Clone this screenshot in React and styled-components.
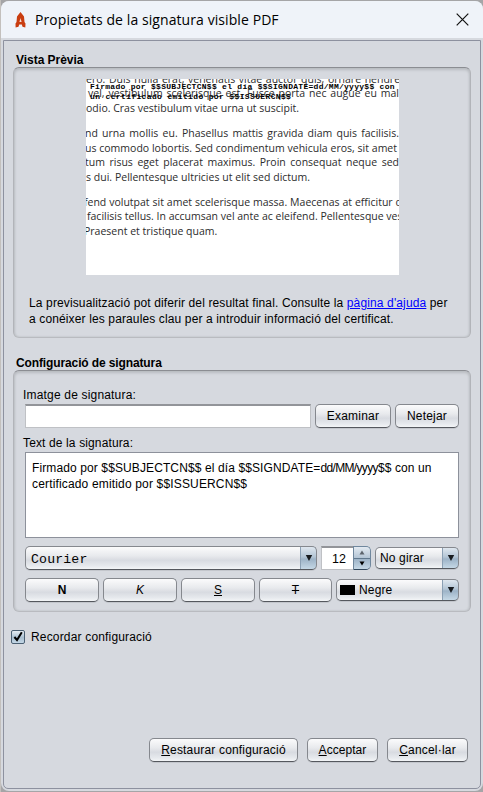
import React from "react";
import styled, { createGlobalStyle, css } from "styled-components";

const GlobalStyle = createGlobalStyle`
  * { box-sizing: border-box; }
  body { margin: 0; background: #b4b2b0; overflow: hidden; }
  button { font: inherit; color: inherit; margin: 0; }
`;

const Desktop = styled.div`
  width: 483px;
  height: 792px;
  padding: 1px 0 1px 1px;
  background: linear-gradient(90deg, #c3c0bd 0 1px, #a5a5a7 1px);
  font: 12px/16px "Liberation Sans", Arial, sans-serif;
  color: #000;
`;

const Window = styled.div`
  display: flex;
  flex-direction: column;
  height: 790px;
  border-radius: 8px;
  background: #d6d9df;
  overflow: hidden;
`;

const TitleBar = styled.header`
  display: flex;
  align-items: center;
  flex: none;
  height: 37px;
  padding: 0 14px 0 14px;
  background: #eff3f9;
`;

const Title = styled.h1`
  flex: 1;
  margin: 0 0 0 9px;
  font: 400 14px/20px "Open Sans", "Noto Sans", sans-serif;
  letter-spacing: 0.08px;
  white-space: nowrap;
`;

const Frame = styled.main`
  flex: 1;
  margin: 2px 2px 2px 2px;
  padding: 11px 9px 0;
  border: 1px solid #8d919f;
  border-bottom-right-radius: 5px;
  border-bottom-left-radius: 5px;
`;

const SectionTitle = styled.h2`
  height: 15px;
  margin: 0 0 0 3px;
  font-size: 12px;
  line-height: 16px;
  font-weight: 700;
  white-space: nowrap;
  letter-spacing: ${(p) => p.$track || 0}px;
`;

const Panel = styled.section`
  height: ${(p) => p.$height}px;
  margin-bottom: ${(p) => p.$gap}px;
  padding: ${(p) => p.$padding};
  border: 1px solid #b2b4b9;
  border-top-color: #8b8d92;
  border-bottom-color: #b9bbc0;
  border-radius: 6px;
  box-shadow: inset 0 2px 3px #b9bcc1, inset 1px 0 2px #c3c6cb, inset -1px 0 2px #c3c6cb;
`;

const Preview = styled.div`
  position: relative;
  width: 313px;
  height: 196px;
  margin-left: 72px;
  background: #fff;
  overflow: hidden;
  color: #2c2c2c;
  font: 10.5px/14.45px "Open Sans", "Noto Sans", sans-serif;
`;

const PageText = styled.div`
  margin-top: -7px;
`;

const PageLine = styled.div`
  width: ${(p) => p.$width}px;
  margin-left: ${(p) => p.$left || 0}px;
  margin-bottom: ${(p) => (p.$last ? 10.9 : 0)}px;
  height: 14.45px;
  white-space: nowrap;
  text-align-last: justify;
`;

const Stamp = styled.div`
  position: absolute;
  left: 4px;
  top: 3px;
  color: #000;
  font: 700 8px/10.3px "Liberation Mono", monospace;
  white-space: pre;
`;

const Note = styled.p`
  margin: 20px 0 0 15px;
  white-space: nowrap;
`;

const HelpLink = styled.a`
  color: #00f;
  text-decoration: underline;
`;

const Line = styled.span`
  display: block;
  letter-spacing: ${(p) => p.$track || 0}px;
`;

const Tight = styled.span`
  letter-spacing: -0.65px;
`;

const Label = styled.label`
  display: block;
  margin-left: -2px;
  height: 16px;
  letter-spacing: ${(p) => p.$track || 0}px;
`;

const Row = styled.div`
  display: flex;
  align-items: center;
  gap: 4px;
  margin-top: ${(p) => p.$top || 0}px;
`;

const TextInput = styled.input`
  width: 286px;
  height: 24px;
  border: 1px solid #bfc1c5;
  border-top: 2px solid #929499;
  background: #fff;
`;

const TextBox = styled.div`
  height: 86px;
  margin-top: 1px;
  padding: 7px 6px;
  border: 1px solid #8d919b;
  background: #fff;
  white-space: nowrap;
`;

const raised = css`
  border: 1px solid #85888e;
  border-bottom-color: #55585e;
  border-radius: 5px;
  background: linear-gradient(#fbfbfc 0%, #e8eaed 40%, #d8dbe1 60%, #e6e9ed 85%, #f3f5f7 100%);
  box-shadow: 0 1px 0 #c3c6cc;
`;

const Button = styled.button`
  ${raised}
  flex: none;
  width: ${(p) => p.$width}px;
  height: 24px;
  padding: 0;
  line-height: 16px;
  white-space: nowrap;
  letter-spacing: ${(p) => p.$track || 0}px;
`;

const Bold = styled.b``;
const Italic = styled.i``;
const Mnemonic = styled.u`
  text-underline-offset: 1px;
`;
const Struck = styled.s``;

const Select = styled.div`
  ${raised}
  display: flex;
  align-items: center;
  flex: none;
  width: ${(p) => p.$width}px;
  height: ${(p) => p.$height || 22}px;
  padding-left: ${(p) => p.$inset || 4}px;
  overflow: hidden;
  white-space: nowrap;
  letter-spacing: 0.15px;
  font-family: ${(p) => (p.$mono ? '"Liberation Mono", monospace' : "inherit")};
  font-size: ${(p) => (p.$mono ? 13.2 : 12)}px;
`;

const FontName = styled.span`
  padding-top: 3px;
`;

const SelectArrow = styled.span`
  display: flex;
  align-items: center;
  justify-content: center;
  width: 17px;
  align-self: stretch;
  margin: -1px -1px -1px auto;
  border: 1px solid #41576b;
  border-top-color: #6f879d;
  border-left-color: #8ba0b4;
  border-radius: 0 5px 5px 0;
  background: linear-gradient(#dfe7ef 0%, #b3c5d5 45%, #9db3c7 55%, #c5d8e6 100%);
`;

const Swatch = styled.span`
  width: 15px;
  height: 10px;
  margin-right: 4px;
  background: #000;
`;

const Spinner = styled.div`
  display: flex;
  width: 50px;
  height: 24px;
`;

const SpinnerValue = styled.span`
  flex: 1;
  padding-right: 7px;
  border: 1px solid #bfc1c5;
  border-top: 2px solid #929499;
  border-right: 0;
  background: #fff;
  font-size: 12.5px;
  line-height: 22px;
  text-align: right;
`;

const SpinnerSteps = styled.span`
  display: flex;
  flex-direction: column;
  width: 18px;
  border: 1px solid #6f879d;
  border-bottom-color: #30465a;
  border-radius: 0 5px 5px 0;
  background: #a9bdcf;
  overflow: hidden;
`;

const Step = styled.span`
  display: flex;
  align-items: center;
  justify-content: center;
  flex: 1;
  background: ${(p) => (p.$down ? "linear-gradient(#9db3c7, #c5d8e6)" : "linear-gradient(#e3eaf1, #b3c5d5)")};
  border-top: ${(p) => (p.$down ? "1px solid #60788d" : "0")};
`;

const CheckRow = styled.label`
  display: flex;
  align-items: center;
  gap: 6px;
  height: 16px;
  margin-left: -2px;
  line-height: 18px;
  letter-spacing: 0.17px;
`;

const CheckBox = styled.span`
  display: flex;
  width: 14px;
  height: 14px;
  border: 1px solid #4b6073;
  border-radius: 2px;
  background: linear-gradient(#e6edf3, #a9bfd1 55%, #c3d7e6);
`;

const Footer = styled.footer`
  display: flex;
  justify-content: flex-end;
  gap: 9px;
  margin: 93px 3px 0 0;
`;

const Logo = () => (
  <svg width="11" height="16" viewBox="0 0 11 16">
    <path d="M5.5 0 L9 4.5 L9.5 10 L10.5 11.5 L10.3 15.5 L7.5 14.7 L6.8 12.4 L4.2 12.4 L3.5 14.7 L0.6 15.5 L0.5 11.5 L1.5 10 L2 4.5 Z" fill="#c93d10" />
    <path d="M5.5 6 L6.6 10 L4.4 10 Z" fill="#f6ddd2" />
  </svg>
);

const CloseIcon = () => (
  <svg width="13" height="13" viewBox="0 0 13 13">
    <path d="M0.7 0.7 L12.3 12.3 M12.3 0.7 L0.7 12.3" stroke="#111" strokeWidth="1.2" fill="none" />
  </svg>
);

const ArrowDown = () => (
  <svg width="8" height="8" viewBox="0 0 8 8">
    <path d="M0.8 0.9 H7.2 L4 7 Z" fill="#171b1f" />
  </svg>
);

const StepArrow = ({ up }) => (
  <svg width="6" height="5" viewBox="0 0 6 5">
    <path d={up ? "M0.5 4.5 H5.5 L3 0.5 Z" : "M0.5 0.5 H5.5 L3 4.5 Z"} fill={up ? "#5c646c" : "#000"} />
  </svg>
);

const CheckMark = () => (
  <svg width="12" height="12" viewBox="0 0 12 12">
    <path d="M2.4 6 L5 9 L9.8 1.3" stroke="#000" strokeWidth="2" fill="none" />
  </svg>
);

const PAGE = [
  { text: "ero. Duis nulla erat, venenatis vitae auctor quis, ornare hendreri", width: 321 },
  { text: "vel, vestibulum scelerisque est. Fusce porta nec augue eu mal", width: 311, left: 2 },
  { text: "odio. Cras vestibulum vitae urna ut suscipit.", width: 212, last: true },
  { text: "nd urna mollis eu. Phasellus mattis gravida diam quis facilisis.", width: 314, left: -1 },
  { text: "us commodo lobortis. Sed condimentum vehicula eros, sit amet", width: 312, left: -1 },
  { text: "tum risus eget placerat maximus. Proin consequat neque sed", width: 314, left: -1 },
  { text: "s dui. Pellentesque ultricies ut elit sed dictum.", width: 224, last: true },
  { text: "fend volutpat sit amet scelerisque massa. Maecenas at efficitur d", width: 318, left: -2 },
  { text: "facilisis tellus. In accumsan vel ante ac eleifend. Pellentesque ves", width: 315, left: 1 },
  { text: "Praesent et tristique quam.", width: 132, left: -2 },
];

export default function App() {
  return (
    <Desktop>
      <GlobalStyle />
      <Window>
        <TitleBar>
          <Logo />
          <Title>Propietats de la signatura visible PDF</Title>
          <CloseIcon />
        </TitleBar>
        <Frame>
          <SectionTitle $track={-0.04}>Vista Prèvia</SectionTitle>
          <Panel $height={271} $gap={17} $padding="11px 0 0">
            <Preview>
              <PageText>
                {PAGE.map((l) => (
                  <PageLine key={l.text} $width={l.width} $left={l.left} $last={l.last}>{l.text}</PageLine>
                ))}
              </PageText>
              <Stamp>
                <Line $track={0.28}>{"Firmado por $$SUBJECTCN$$ el día $$SIGNDATE=dd/MM/yyyy$$ con"}</Line>
                <Line $track={0.36}>{"un certificado emitido por $$ISSUERCN$$"}</Line>
              </Stamp>
            </Preview>
            <Note>
              <Line $track={0.13}>La previsualització pot diferir del resultat final. Consulte la <HelpLink>pàgina d'ajuda</HelpLink> per</Line>
              <Line $track={0.13}>a conéixer les paraules clau per a introduir informació del certificat.</Line>
            </Note>
          </Panel>
          <SectionTitle $track={-0.12}>Configuració de signatura</SectionTitle>
          <Panel $height={242} $gap={17} $padding="16px 11px 0">
            <Label $track={0.18}>Imatge de signatura:</Label>
            <Row $top={1}>
              <TextInput />
              <Button $width={76} $track={0.2}>Examinar</Button>
              <Button $width={64} $track={0.2}>Netejar</Button>
            </Row>
            <Row $top={7}><Label $track={0.13}>Text de la signatura:</Label></Row>
            <TextBox>
              <Line $track={0.11}>Firmado por $$SUBJECTCN$$ el día $$SIGNDATE=<Tight>dd/MM/yyyy</Tight>$$ con un</Line>
              <Line $track={0.16}>certificado emitido por $$ISSUERCN$$</Line>
            </TextBox>
            <Row $top={8}>
              <Select $width={292} $height={24} $inset={5} $mono><FontName>Courier</FontName><SelectArrow><ArrowDown /></SelectArrow></Select>
              <Spinner>
                <SpinnerValue>12</SpinnerValue>
                <SpinnerSteps>
                  <Step><StepArrow up /></Step>
                  <Step $down><StepArrow /></Step>
                </SpinnerSteps>
              </Spinner>
              <Select $width={84}>No girar<SelectArrow><ArrowDown /></SelectArrow></Select>
            </Row>
            <Row $top={8}>
              <Button $width={74}><Bold>N</Bold></Button>
              <Button $width={74}><Italic>K</Italic></Button>
              <Button $width={74}><Mnemonic>S</Mnemonic></Button>
              <Button $width={73}><Struck>T</Struck></Button>
              <Select $width={123} $inset={3}><Swatch />Negre<SelectArrow><ArrowDown /></SelectArrow></Select>
            </Row>
          </Panel>
          <CheckRow><CheckBox><CheckMark /></CheckBox>Recordar configuració</CheckRow>
          <Footer>
            <Button $width={149} $track={0.17}><Mnemonic>R</Mnemonic>estaurar configuració</Button>
            <Button $width={71} $track={0.05}><Mnemonic>A</Mnemonic>cceptar</Button>
            <Button $width={81} $track={0.2}><Mnemonic>C</Mnemonic>ancel·lar</Button>
          </Footer>
        </Frame>
      </Window>
    </Desktop>
  );
}
